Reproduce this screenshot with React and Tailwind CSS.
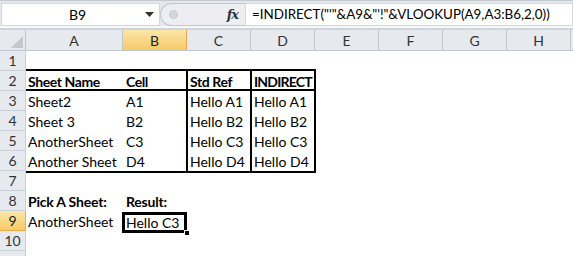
import React from "react";

const cols = [
  { l: "A", w: "w-[97px]" },
  { l: "B", w: "w-[64px]", sel: true },
  { l: "C", w: "w-[64px]" },
  { l: "D", w: "w-[64px]" },
  { l: "E", w: "w-[64px]" },
  { l: "F", w: "w-[64px]" },
  { l: "G", w: "w-[64px]" },
  { l: "H", w: "w-[64px]" },
];

const data = [
  ["Sheet2", "A1", "Hello A1", "Hello A1"],
  ["Sheet 3", "B2", "Hello B2", "Hello B2"],
  ["AnotherSheet", "C3", "Hello C3", "Hello C3"],
  ["Another Sheet", "D4", "Hello D4", "Hello D4"],
];

function Cell({ children, className = "" }) {
  return (
    <div className={"flex items-center pl-[2px] whitespace-nowrap overflow-visible " + className}>
      {children}
    </div>
  );
}

export default function App() {
  return (
    <div className="w-[573px] h-[256px] overflow-hidden bg-white font-['Lato',sans-serif] text-[14px] text-black">
      {/* Formula bar */}
      <div className="h-[30px] bg-[#e4e7eb] border-t border-[#c5cad1] flex flex-col">
        <div className="flex h-[23px] mt-[2px]">
          <div className="w-[159px] ml-[1px] bg-white border border-[#d4d8de] flex items-center relative">
            <span className="flex-1 text-center pl-[8px]">B9</span>
            <svg width="9" height="5" viewBox="0 0 9 5" className="mr-[5px]">
              <path d="M0 0 L9 0 L4.5 5 Z" fill="#333" />
            </svg>
          </div>
          <div className="w-[85px] flex items-center">
            <div className="h-full flex-1 rounded-l-full border border-r-0 border-[#c2c7ce] bg-[#eceef1] flex items-center pl-[8px]">
              <div className="w-[9px] h-[9px] rounded-full bg-[#d4d7dc] border border-[#c6c9ce]" />
              <span className="ml-auto mr-[7px] font-['DejaVu_Serif',serif] italic font-bold text-[13px] text-[#333] tracking-[-1px]">
                fx
              </span>
            </div>
          </div>
          <div className="flex-1 bg-white border border-[#d4d8de] flex items-center pl-[6px] whitespace-nowrap text-[13.4px]">
            =INDIRECT("'"&amp;A9&amp;"'!"&amp;VLOOKUP(A9,A3:B6,2,0))
          </div>
        </div>
        <div className="h-[2px] bg-[#f7f8f9]" />
        <div className="flex-1 bg-[#cfd4db]" />
      </div>

      {/* Column headers */}
      <div className="flex h-[21px] bg-[#e6e9ee] border-b border-[#c0c7d1]">
        <div className="w-[26px] border-r border-[#c0c7d1] relative flex items-end justify-end p-[2px]">
          <svg width="12" height="12" viewBox="0 0 12 12">
            <path d="M12 0 L12 12 L0 12 Z" fill="#c4c8ce" />
          </svg>
        </div>
        {cols.map((c) => (
          <div
            key={c.l}
            className={
              c.w +
              " flex items-center justify-center border-r " +
              (c.sel
                ? "bg-gradient-to-b from-[#fbe6a9] to-[#f6cb63] border-[#f2a849] text-[#222]"
                : "border-[#c0c7d1] text-[#333]")
            }
          >
            {c.l}
          </div>
        ))}
      </div>

      {/* Body */}
      <div className="flex">
        <div className="w-[26px] flex flex-col shrink-0">
          {[1, 2, 3, 4, 5, 6, 7, 8, 9, 10, 11].map((n) => (
            <div
              key={n}
              className={
                "h-[20px] flex items-center justify-center border-b border-r " +
                (n === 9
                  ? "bg-gradient-to-b from-[#fbe6a9] to-[#f6cb63] border-[#f2a849] text-[#222]"
                  : "bg-[#e6e9ee] border-[#c9d0d9] text-[#333]")
              }
            >
              {n < 11 ? n : ""}
            </div>
          ))}
        </div>

        <div className="flex-1 flex flex-col">
          <div className="h-[18px]" />
          {/* Table */}
          <div className="w-[290px] border-y-2 border-black">
            <div className="grid grid-cols-[97px_65px_64px_64px] h-[20px] border-b-2 border-black font-bold tracking-[-0.4px]">
              <Cell>Sheet Name</Cell>
              <Cell className="border-r-2 border-black pl-[3px]">Cell</Cell>
              <Cell className="border-r-2 border-black">Std Ref</Cell>
              <Cell className="border-r-2 border-black tracking-[-0.8px]">INDIRECT</Cell>
            </div>
            {data.map((r, i) => (
              <div key={i} className="grid grid-cols-[97px_65px_64px_64px] h-[20px]">
                <Cell>{r[0]}</Cell>
                <Cell className="border-r-2 border-black pl-[3px]">{r[1]}</Cell>
                <Cell className="border-r-2 border-black">{r[2]}</Cell>
                <Cell className="border-r-2 border-black">{r[3]}</Cell>
              </div>
            ))}
          </div>
          <div className="h-[18px]" />
          <div className="grid grid-cols-[97px_64px] h-[20px] font-bold tracking-[-0.2px]">
            <Cell>Pick A Sheet:</Cell>
            <Cell className="pl-[3px]">Result:</Cell>
          </div>
          <div className="grid grid-cols-[97px_64px] h-[20px]">
            <Cell>AnotherSheet</Cell>
            <div className="relative">
              <div className="absolute left-[-1px] top-[1px] w-[65px] h-[21px] border-[3px] border-black flex items-center pl-[1px]">
                Hello C3
              </div>
              <div className="absolute left-[61px] top-[19px] w-[6px] h-[6px] bg-black border border-white" />
            </div>
          </div>
        </div>
      </div>
    </div>
  );
}
